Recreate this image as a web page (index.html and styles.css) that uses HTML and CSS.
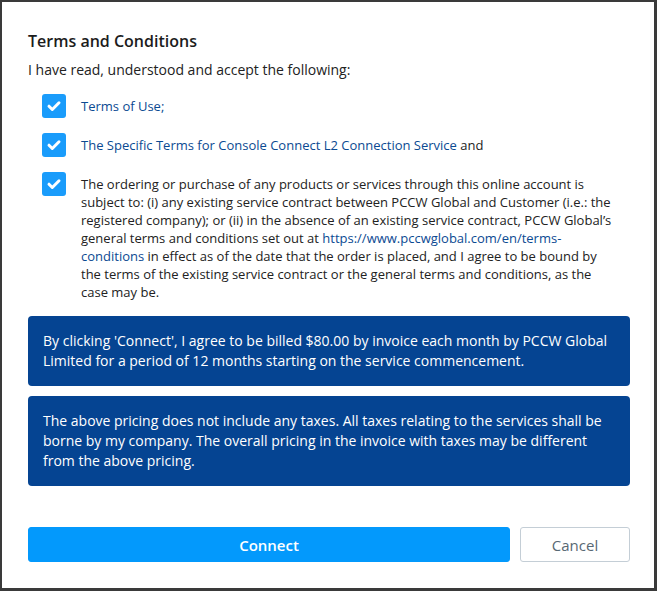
FILE: index.html
```html
<!DOCTYPE html>
<html>
<head>
<meta charset="utf-8">
<link rel="stylesheet" href="styles.css">
</head>
<body>
<div class="frame">
  <h1 class="title">Terms and Conditions</h1>
  <p class="intro">I have read, understood and accept the following:</p>
  <div class="items">
    <div class="item center">
      <span class="check"><svg viewBox="0 0 24 24" width="24" height="24"><path d="M7 12.2l3.3 3.3L17 8.8" fill="none" stroke="#fff" stroke-width="3" stroke-linecap="round" stroke-linejoin="round"/></svg></span>
      <span class="label"><a class="link">Terms of Use;</a></span>
    </div>
    <div class="item center">
      <span class="check"><svg viewBox="0 0 24 24" width="24" height="24"><path d="M7 12.2l3.3 3.3L17 8.8" fill="none" stroke="#fff" stroke-width="3" stroke-linecap="round" stroke-linejoin="round"/></svg></span>
      <span class="label"><a class="link">The Specific Terms for Console Connect L2 Connection Service</a> and</span>
    </div>
    <div class="item top">
      <span class="check"><svg viewBox="0 0 24 24" width="24" height="24"><path d="M7 12.2l3.3 3.3L17 8.8" fill="none" stroke="#fff" stroke-width="3" stroke-linecap="round" stroke-linejoin="round"/></svg></span>
      <span class="label multi">The ordering or purchase of any products or services through this online account is subject to: (i) any existing service contract between PCCW Global and Customer (i.e.: the registered company); or (ii) in the absence of an existing service contract, PCCW Global’s general terms and conditions set out at <a class="link">https://www.pccwglobal.com/en/terms-conditions</a> in effect as of the date that the order is placed, and I agree to be bound by the terms of the existing service contract or the general terms and conditions, as the case may be.</span>
    </div>
  </div>
  <div class="notice">By clicking 'Connect', I agree to be billed $80.00 by invoice each month by PCCW Global Limited for a period of 12 months starting on the service commencement.</div>
  <div class="notice">The above pricing does not include any taxes. All taxes relating to the services shall be borne by my company. The overall pricing in the invoice with taxes may be different from the above pricing.</div>
  <div class="actions">
    <button class="btn primary">Connect</button>
    <button class="btn secondary">Cancel</button>
  </div>
</div>
</body>
</html>
```
FILE: styles.css
```css
html, body {
  margin: 0;
  padding: 0;
  background: #fff;
}
.frame {
  box-sizing: border-box;
  width: 657px;
  height: 591px;
  border: 2px solid #3a3a3a;
  border-right-width: 3px;
  border-bottom-width: 3px;
  padding: 28px 24px 0 26px;
  font-family: "Open Sans", "Liberation Sans", sans-serif;
  color: #222;
}
.title {
  margin: 0;
  font-size: 16px;
  line-height: 22px;
  font-weight: 600;
  color: #1c1c1c;
}
.intro {
  margin: 8px 0 0;
  font-size: 14px;
  line-height: 20px;
}
.items {
  margin: 14px 0 0 14px;
  display: flex;
  flex-direction: column;
  gap: 15px;
}
.item {
  display: flex;
  gap: 15px;
}
.item.center { align-items: center; }
.item.top { align-items: flex-start; }
.check {
  flex: 0 0 24px;
  width: 24px;
  height: 24px;
  border-radius: 3px;
  background: #1a9cfb;
  display: block;
}
.check svg { display: block; }
.label {
  font-size: 13px;
  line-height: 18px;
}
.label.multi {
  margin-top: 3px;
  max-width: 535px;
}
.link {
  color: #0b4a92;
  text-decoration: none;
}
.notice {
  margin-top: 10px;
  background: #054492;
  color: #fff;
  border-radius: 4px;
  padding: 15px 15px;
  font-size: 14px;
  line-height: 20px;
}
.items + .notice { margin-top: 15px; }
.actions {
  margin-top: 41px;
  display: flex;
  gap: 10px;
}
.btn {
  height: 35px;
  border-radius: 3px;
  font-family: "Open Sans", "Liberation Sans", sans-serif;
  font-size: 15px;
  cursor: pointer;
}
.primary {
  flex: 1;
  background: #0399fc;
  border: 1px solid #0399fc;
  color: #fff;
  font-weight: 600;
}
.secondary {
  width: 110px;
  background: #fff;
  border: 1px solid #c4ced6;
  color: #586874;
}
```
